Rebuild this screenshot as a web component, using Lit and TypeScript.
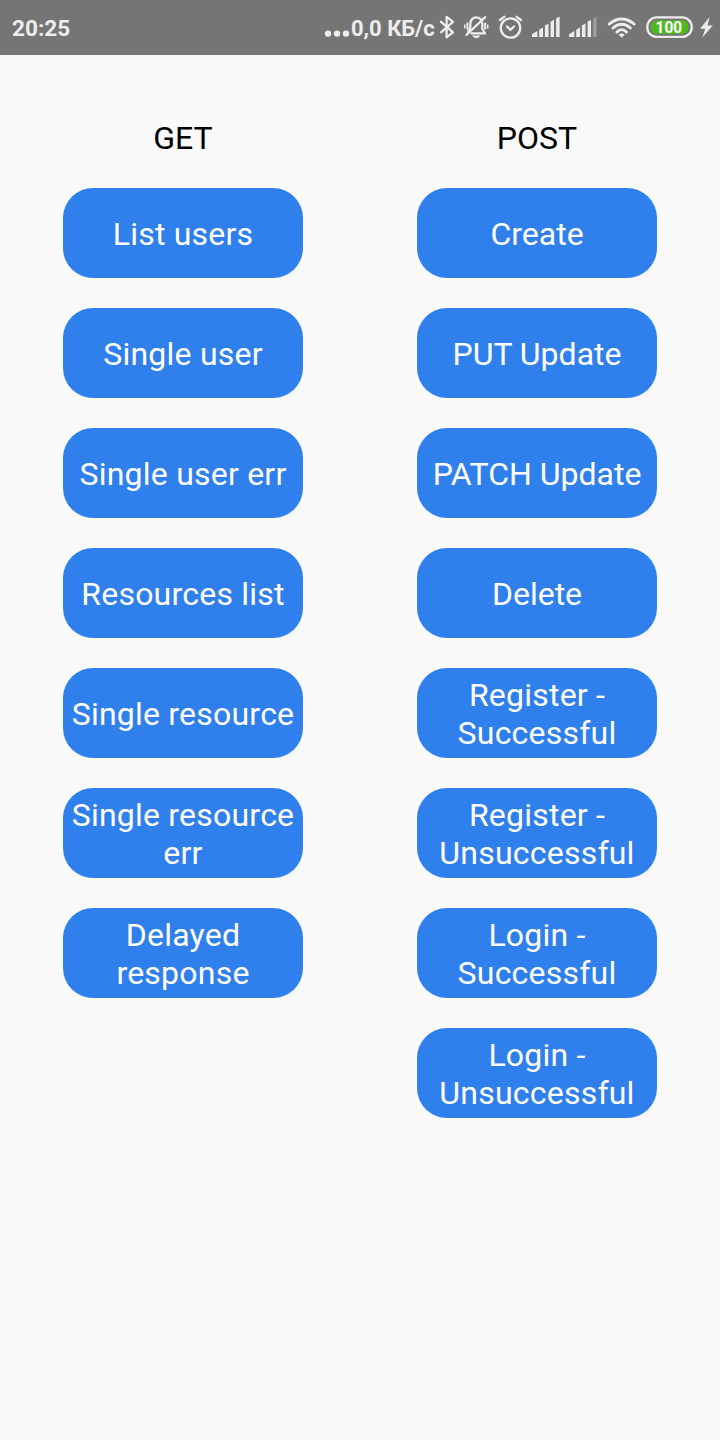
import { LitElement, html, svg, css } from "lit";
import { customElement, property } from "lit/decorators.js";
import { classMap } from "lit/directives/class-map.js";

@customElement("status-bar")
class StatusBar extends LitElement {
  static styles = css`
    :host {
      display: flex;
      height: 55px;
      background: #757575;
      color: #ededed;
      font: 700 22.6px/57px Roboto, sans-serif;
      white-space: pre;
    }
    .time { flex: 1; padding-left: 12px; }
    .speed { width: 85px; font-size: 22px; }
    svg { display: block; flex: none; }
    .line { fill: none; stroke: #ededed; stroke-width: 2.3; stroke-linecap: round; stroke-linejoin: round; }
    .wifi { stroke-width: 2.9; }
    .solid { fill: #ededed; }
    .dim { fill: #9c9c9c; }
    .charge { fill: #4fb81c; }
    .level { fill: #fff; font: 700 17.3px Roboto, sans-serif; }
  `;

  private bars(x: number, weakLast: boolean) {
    const shapes = [
      [0, 5.4, 34.2, 31], [7.2, 3.8, 29.8, 27.4], [12.9, 3.6, 25.6, 23.4], [18.6, 3.4, 21.8, 19.8], [24.1, 3.5, 18.4, 16.6],
    ];
    return shapes.map(([dx, w, left, right], i) => svg`<path
      class=${weakLast && i === 4 ? "dim" : "solid"}
      d="M${x + dx} 37V${left}L${x + dx + w} ${right}V37Z"/>`);
  }

  render() {
    return html`
      <span class="time">20:25</span>
      <svg width="29" height="55" viewBox="322 0 29 55">
        <g class="solid"><circle cx="328" cy="33.6" r="3.2"/><circle cx="337" cy="33.6" r="3.2"/><circle cx="346" cy="33.6" r="3.2"/></g>
      </svg>
      <span class="speed">0,0 КБ/с</span>
      <svg width="24" height="55" viewBox="436 0 24 55">
        <path class="line" d="M441 21.8L453 32.3L446.6 37.4V16.8L453 21.8L441 32.3"/>
      </svg>
      <svg width="33" height="55" viewBox="460 0 33 55">
        <g class="line">
          <path d="M470.3 27V24C470.3 20 473 17.3 476.3 17.3C478.2 17.3 480 18.2 481 19.5M482.3 23V29L485 33.4H471.5M466.4 35L485.2 17.2M470.3 27.5L468 32"/>
        </g>
        <path class="solid" d="M464 24.5H465.4V28.5H464ZM466.4 22.8H468.4V29.5H466.4ZM484.2 22.8H486.2V29.5H484.2ZM487 24.5H488.4V28.5H487Z"/>
        <path class="solid" d="M472 35.6H480.5Q479 38.2 476.3 38.2Q473.5 38.2 472 35.6Z"/>
      </svg>
      <svg width="36" height="55" viewBox="493 0 36 55">
        <g class="line"><circle cx="510.5" cy="28" r="9.7"/><path d="M507 26.5L510.5 29.8L514 26.5M500 20L504.3 16.8M516.7 16.8L521 20"/></g>
      </svg>
      <svg width="74" height="55" viewBox="529 0 74 55">${this.bars(532, false)}${this.bars(569, true)}</svg>
      <svg width="37" height="55" viewBox="603 0 37 55">
        <path class="line wifi" d="M609.2 24Q621.7 13.8 634.2 24M613 28Q621.7 20.6 630.4 28M616.9 32Q621.7 27.2 626.5 32"/>
        <path class="solid" d="M618.6 34.5Q621.7 32.4 624.8 34.5L621.7 37.7Z"/>
      </svg>
      <svg width="56" height="55" viewBox="640 0 56 55">
        <rect class="line" x="647.3" y="17.3" width="44.4" height="19.6" rx="9.5"/>
        <rect class="charge" x="650.5" y="20.2" width="38" height="13.8" rx="6.5"/>
        <text class="level" x="668.8" y="33.2" text-anchor="middle" textLength="26.5" lengthAdjust="spacingAndGlyphs">100</text>
      </svg>
      <svg width="24" height="55" viewBox="696 0 24 55">
        <path class="solid" d="M709.6 17L700 28.7H705.3L702.2 37.7L712.8 25.6H707.5Z"/>
      </svg>
    `;
  }
}

interface Action {
  label: string;
  wide?: boolean;
}

@customElement("request-column")
class RequestColumn extends LitElement {
  @property() heading = "";
  @property({ attribute: false }) actions: Action[] = [];

  static styles = css`
    :host {
      display: flex;
      flex-direction: column;
      align-items: center;
      gap: 30px;
      width: 240px;
      font: 400 32px/38px Roboto, sans-serif;
    }
    h2 { margin: 0; padding-bottom: 1px; font: inherit; color: #000; }
    button {
      width: 240px;
      height: 90px;
      padding: 2px 6px 0;
      border: 0;
      border-radius: 30px;
      background: #2f80ed;
      color: #fff;
      font: inherit;
    }
    .wide { letter-spacing: 0.22px; }
  `;

  render() {
    return html`<h2>${this.heading}</h2>
      ${this.actions.map(({ label, wide = false }) => html`<button class=${classMap({ wide })}>${label}</button>`)}`;
  }
}

@customElement("app-root")
class AppRoot extends LitElement {
  static styles = css`
    :host { display: block; min-height: 1440px; background: #fafafb; }
    main { display: flex; justify-content: space-between; padding: 64px 63px 0; align-items: flex-start; }
  `;

  private getActions: Action[] = [
    "List users", "Single user", "Single user err", "Resources list",
    "Single resource", "Single resource err", "Delayed response",
  ].map((label) => ({ label, wide: true }));

  private postActions: Action[] = [
    { label: "Create" },
    { label: "PUT Update" },
    { label: "PATCH Update" },
    { label: "Delete" },
    { label: "Register - Successful", wide: true },
    { label: "Register - Unsuccessful", wide: true },
    { label: "Login - Successful", wide: true },
    { label: "Login - Unsuccessful", wide: true },
  ];

  render() {
    return html`
      <status-bar></status-bar>
      <main>
        <request-column heading="GET" .actions=${this.getActions}></request-column>
        <request-column heading="POST" .actions=${this.postActions}></request-column>
      </main>
    `;
  }
}
